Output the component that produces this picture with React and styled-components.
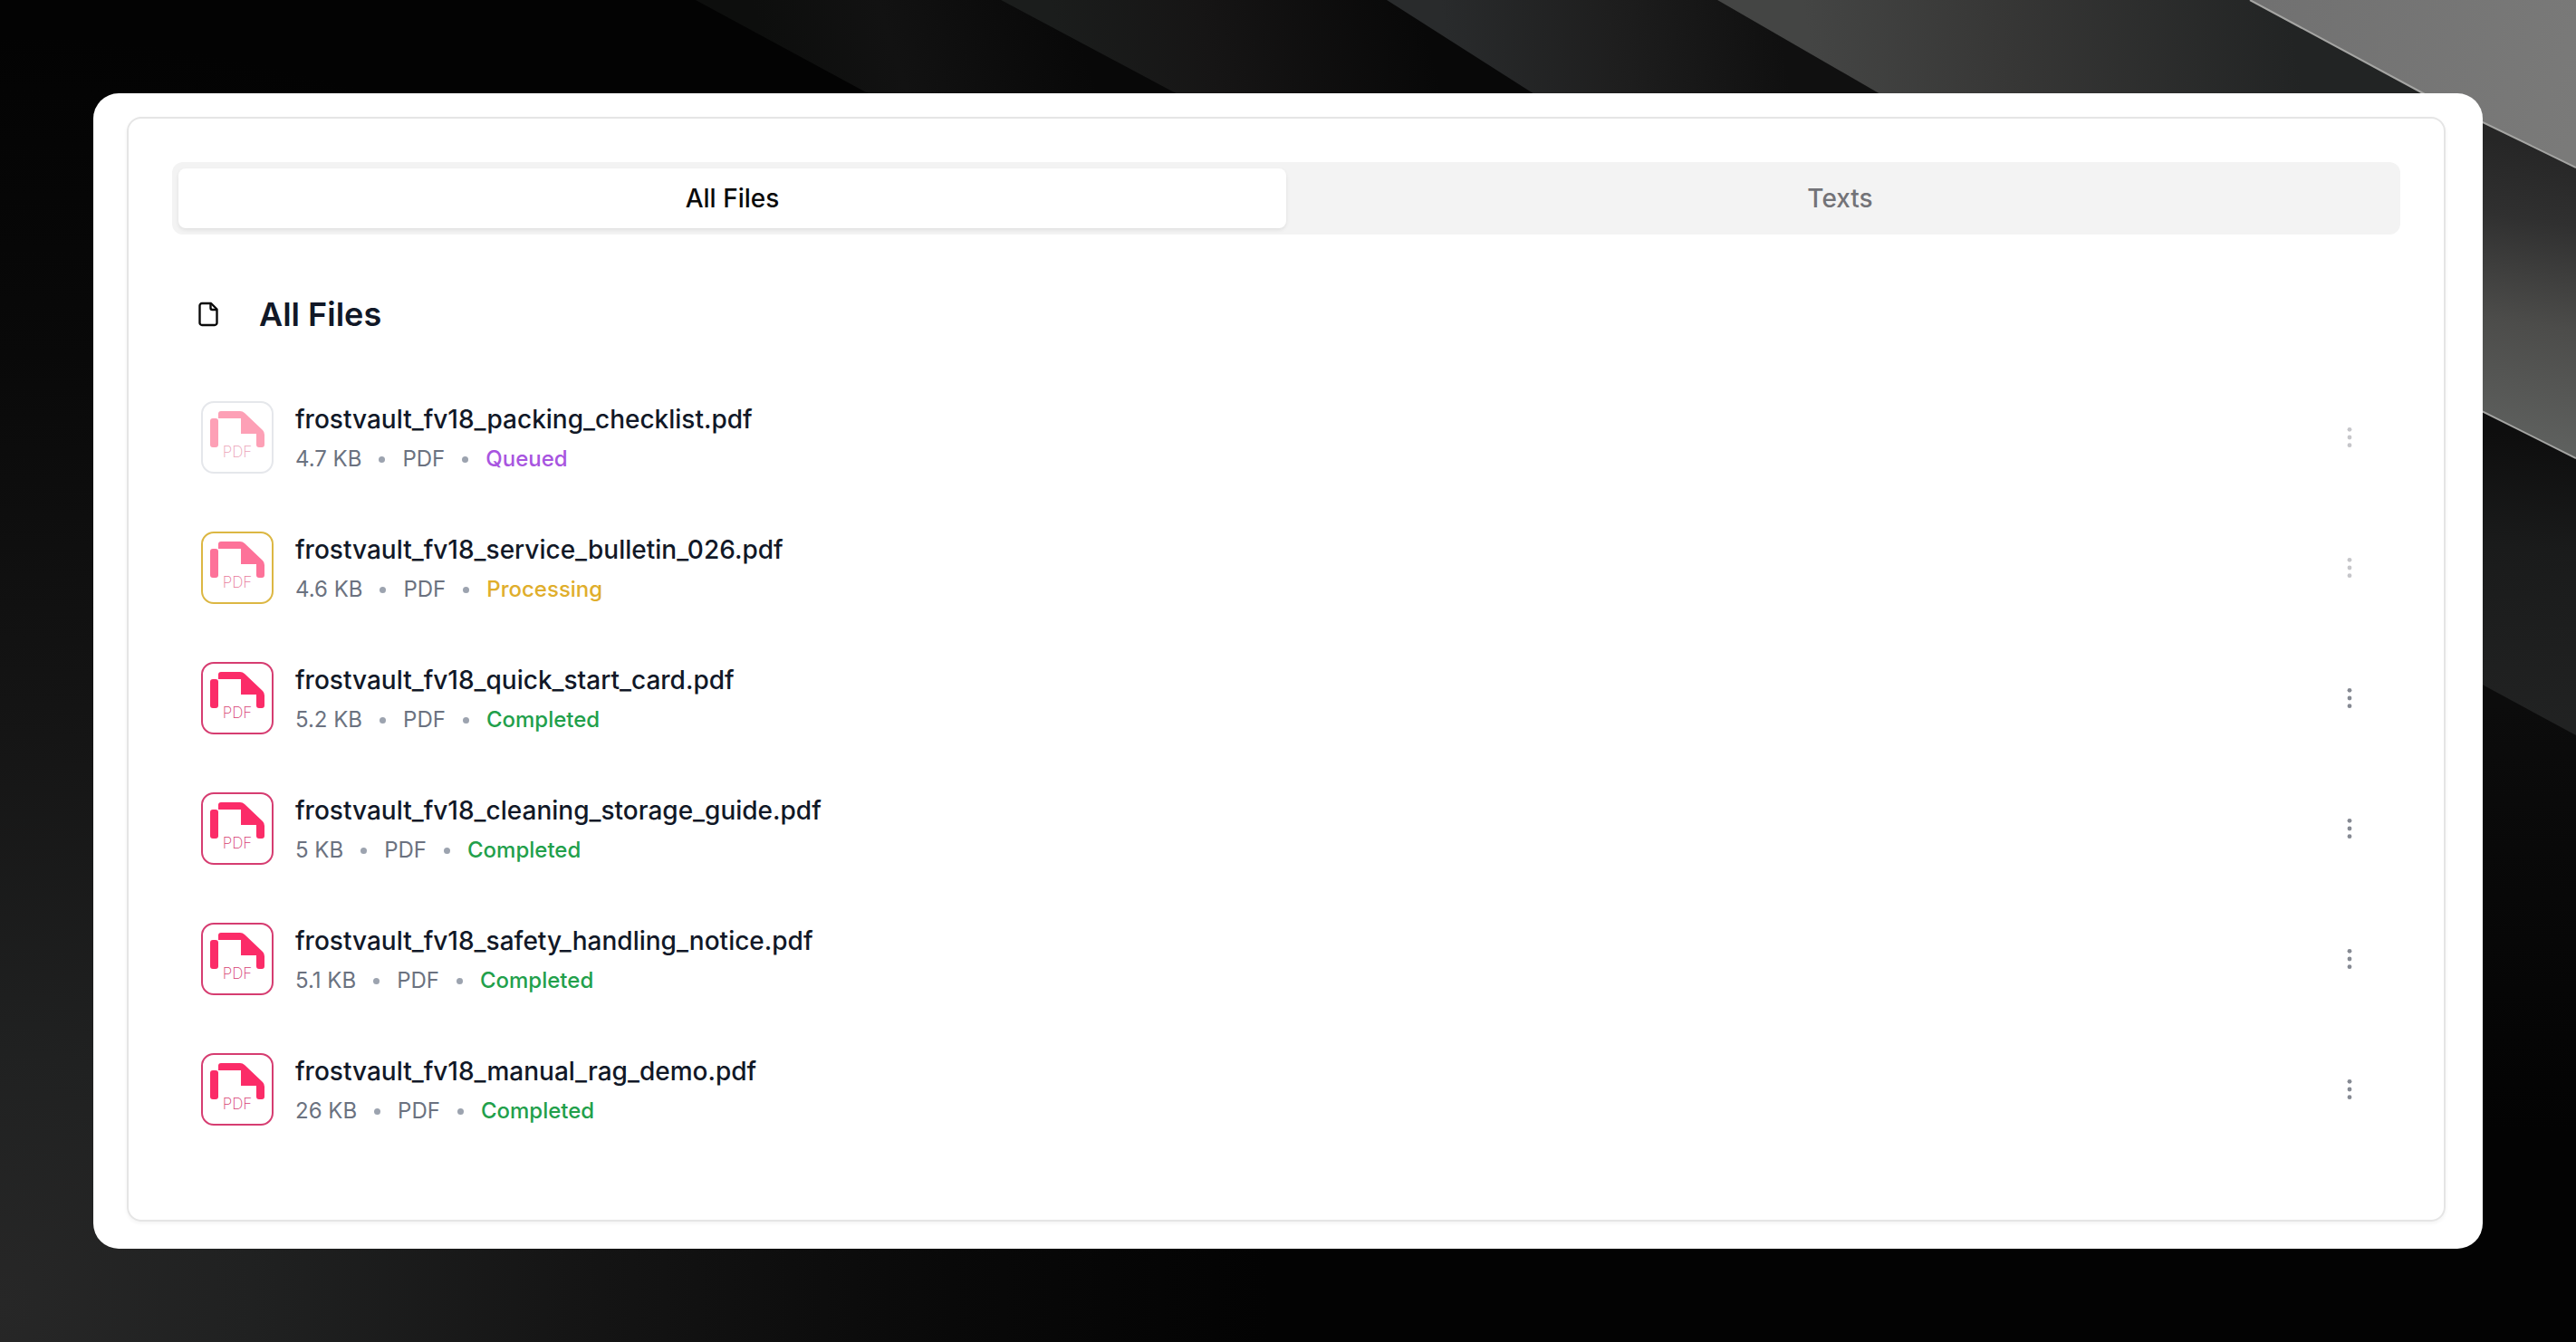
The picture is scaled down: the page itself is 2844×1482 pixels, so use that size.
import React, { useState } from "react";
import styled, { createGlobalStyle } from "styled-components";

const GlobalStyle = createGlobalStyle`
  * {
    box-sizing: border-box;
  }

  body {
    margin: 0;
    background: #000;
    font-family: Inter, "Liberation Sans", sans-serif;
    -webkit-font-smoothing: antialiased;
  }
`;

const Page = styled.main`
  position: relative;
  min-height: 100vh;
  padding: 103px;
  display: flex;
`;

const Backdrop = styled.svg`
  position: absolute;
  inset: 0;
  width: 100%;
  height: 100%;
`;

const Window = styled.div`
  position: relative;
  flex: 1;
  display: flex;
  padding: 26px 41px 30px 37px;
  background: #fff;
  border-radius: 28px;
`;

const Card = styled.section`
  flex: 1;
  padding: 48px;
  border: 2px solid #e5e5e5;
  border-radius: 16px;
  box-shadow: 0 2px 4px rgba(0, 0, 0, 0.05);
`;

const TabList = styled.div`
  display: grid;
  grid-template-columns: 1fr 1fr;
  height: 80px;
  padding: 7px;
  background: #f3f3f3;
  border-radius: 12px;
`;

const Tab = styled.button`
  border: none;
  border-radius: 8px;
  font-family: inherit;
  font-size: 28px;
  font-weight: 500;
  cursor: pointer;
  color: ${({ $active }) => ($active ? "#0a0a0a" : "#737378")};
  background: ${({ $active }) => ($active ? "#fff" : "transparent")};
  box-shadow: ${({ $active }) =>
    $active ? "0 2px 4px rgba(0, 0, 0, 0.08)" : "none"};
`;

const Header = styled.header`
  display: flex;
  align-items: center;
  gap: 42px;
  height: 48px;
  margin: 64px 0 40px 26px;
`;

const Heading = styled.h2`
  margin: 0;
  font-size: 36px;
  font-weight: 600;
  line-height: 48px;
  color: #111827;
`;

const FileList = styled.ul`
  margin: 0;
  padding: 0;
  list-style: none;
`;

const FileRow = styled.li`
  display: flex;
  align-items: center;
  gap: 24px;
  height: 144px;
  padding: 0 32px;
`;

const FileTile = styled.div`
  display: grid;
  place-items: center;
  width: 80px;
  height: 80px;
  border: 2px solid ${({ $border }) => $border};
  border-radius: 14px;
`;

const FileInfo = styled.div`
  flex: 1;
  padding-top: 4px;
`;

const FileName = styled.div`
  font-size: 28px;
  font-weight: 500;
  line-height: 40px;
  color: #111827;
`;

const Meta = styled.div`
  display: flex;
  align-items: center;
  gap: 19px;
  margin-top: 4px;
  font-size: 24px;
  line-height: 40px;
  color: #6b7280;
`;

const Dot = styled.span`
  width: 7px;
  height: 7px;
  border-radius: 50%;
  background: #9ca3af;
`;

const Status = styled.span`
  font-weight: 500;
  color: ${({ $color }) => $color};
`;

const MenuButton = styled.button`
  display: grid;
  place-items: center;
  width: 48px;
  height: 48px;
  padding: 0;
  border: none;
  background: none;
  color: #868a93;
  cursor: pointer;

  &:disabled {
    color: #c6c6ca;
    cursor: default;
  }
`;

const STATUS = {
  Queued: { text: "#a855e0", border: "#e5e7eb", icon: "#fda0b6", label: "#eba3b8" },
  Processing: { text: "#e0ae2c", border: "#dcb743", icon: "#fd7299", label: "#e8799c" },
  Completed: { text: "#22a04b", border: "#d63d71", icon: "#fb2c68", label: "#d63d71" },
};

const FILES = [
  { name: "frostvault_fv18_packing_checklist.pdf", size: "4.7 KB", status: "Queued" },
  { name: "frostvault_fv18_service_bulletin_026.pdf", size: "4.6 KB", status: "Processing" },
  { name: "frostvault_fv18_quick_start_card.pdf", size: "5.2 KB", status: "Completed" },
  { name: "frostvault_fv18_cleaning_storage_guide.pdf", size: "5 KB", status: "Completed" },
  { name: "frostvault_fv18_safety_handling_notice.pdf", size: "5.1 KB", status: "Completed" },
  { name: "frostvault_fv18_manual_rag_demo.pdf", size: "26 KB", status: "Completed" },
];

const TABS = ["All Files", "Texts"];

const Wallpaper = () => (
  <Backdrop viewBox="0 0 2844 1482" preserveAspectRatio="none" aria-hidden="true">
    <defs>
      <radialGradient id="glow" gradientUnits="userSpaceOnUse" cx="0" cy="1440" r="1400">
        <stop offset="0" stopColor="#272727" />
        <stop offset="0.2" stopColor="#202121" />
        <stop offset="0.45" stopColor="#151515" />
        <stop offset="0.75" stopColor="#090909" />
        <stop offset="1" stopColor="#030303" />
      </radialGradient>
      <linearGradient id="band1" gradientUnits="userSpaceOnUse" x1="860" y1="100" x2="1180" y2="0">
        <stop offset="0" stopColor="#0d0e0d" />
        <stop offset="0.4" stopColor="#121212" />
        <stop offset="1" stopColor="#080808" />
      </linearGradient>
      <linearGradient id="band2" gradientUnits="userSpaceOnUse" x1="1180" y1="80" x2="1560" y2="-20">
        <stop offset="0" stopColor="#1b1d1c" />
        <stop offset="0.4" stopColor="#161515" />
        <stop offset="1" stopColor="#080808" />
      </linearGradient>
      <linearGradient id="band3" gradientUnits="userSpaceOnUse" x1="1600" y1="60" x2="1960" y2="0">
        <stop offset="0" stopColor="#292b2c" />
        <stop offset="0.5" stopColor="#1e1e1e" />
        <stop offset="1" stopColor="#101010" />
      </linearGradient>
      <linearGradient id="band4" gradientUnits="userSpaceOnUse" x1="2000" y1="60" x2="2520" y2="-30">
        <stop offset="0" stopColor="#444544" />
        <stop offset="0.4" stopColor="#373736" />
        <stop offset="1" stopColor="#222424" />
      </linearGradient>
      <linearGradient id="band4side" gradientUnits="userSpaceOnUse" x1="2790" y1="160" x2="2740" y2="480">
        <stop offset="0" stopColor="#262626" />
        <stop offset="0.25" stopColor="#303030" />
        <stop offset="0.6" stopColor="#4c4c4a" />
        <stop offset="1" stopColor="#5e605e" />
      </linearGradient>
      <linearGradient id="band3side" gradientUnits="userSpaceOnUse" x1="2790" y1="480" x2="2760" y2="790">
        <stop offset="0" stopColor="#0e0e0e" />
        <stop offset="0.4" stopColor="#1a1b1b" />
        <stop offset="1" stopColor="#212222" />
      </linearGradient>
      <linearGradient id="band2side" gradientUnits="userSpaceOnUse" x1="2790" y1="780" x2="2790" y2="1250">
        <stop offset="0" stopColor="#0c0c0c" />
        <stop offset="1" stopColor="#030303" />
      </linearGradient>
      <linearGradient id="band5" gradientUnits="userSpaceOnUse" x1="2500" y1="0" x2="2844" y2="140">
        <stop offset="0" stopColor="#717171" />
        <stop offset="1" stopColor="#7a7a79" />
      </linearGradient>
    </defs>
    <rect width="2844" height="1482" fill="url(#glow)" />
    <path d="M768 0H1105L1300 104H960Z" fill="url(#band1)" />
    <path d="M1105 0H1531L1694 104H1300Z" fill="url(#band2)" />
    <path d="M1531 0H1896L2076 104H1694Z" fill="url(#band3)" />
    <path d="M1896 0H2484L2677 104H2076Z" fill="url(#band4)" />
    <path d="M2700 730L2844 812V1300H2700Z" fill="url(#band2side)" />
    <path d="M2700 434L2844 506V812L2700 734Z" fill="url(#band3side)" />
    <path d="M2700 114L2844 185V506L2700 434Z" fill="url(#band4side)" />
    <path d="M2484 0H2844V185L2677 104Z" fill="url(#band5)" />
    <path d="M2484 0L2677 104L2844 185M2700 434L2844 506" fill="none" stroke="#a5a5a3" strokeWidth="2" />
  </Backdrop>
);

const FileOutline = () => (
  <svg width="28" height="28" viewBox="0 0 28 28" fill="none" stroke="#0a0a0a" strokeWidth="2.4" strokeLinejoin="round" aria-hidden="true">
    <path d="M7 2H17L23.500 8.500V23.500a2.500 2.500 0 0 1-2.500 2.500H7a2.500 2.500 0 0 1-2.500-2.500V4.500A2.500 2.500 0 0 1 7 2Z" />
    <path d="M16.500 2V7a2 2 0 0 0 2 2H23.500" />
  </svg>
);

const PdfIcon = ({ color, label }) => (
  <svg width="76" height="76" viewBox="0 0 76 76" aria-hidden="true">
    <g fill={color}>
      <path d="M17 12a3 3 0 0 1 3-3H41q3 0 5 2L66 30q2 2 2 5V46a3 3 0 0 1-3 3H62a3 3 0 0 1-3-3V34H42V17H17Z" />
      <rect x="8" y="17" width="9" height="32" rx="3" />
    </g>
    <text x="38" y="60" textAnchor="middle" fontFamily="Inter, sans-serif" fontSize="17" fontWeight="200" fill={label}>
      PDF
    </text>
  </svg>
);

const MoreIcon = () => (
  <svg width="28" height="28" viewBox="0 0 28 28" fill="currentColor" aria-hidden="true">
    <circle cx="14" cy="5.300" r="2.400" />
    <circle cx="14" cy="14" r="2.400" />
    <circle cx="14" cy="22.700" r="2.400" />
  </svg>
);

const App = () => {
  const [activeTab, setActiveTab] = useState("All Files");

  return (
    <>
      <GlobalStyle />
      <Page>
        <Wallpaper />
        <Window>
          <Card>
            <TabList role="tablist">
              {TABS.map((tab) => (
                <Tab
                  key={tab}
                  type="button"
                  role="tab"
                  aria-selected={tab === activeTab}
                  $active={tab === activeTab}
                  onClick={() => setActiveTab(tab)}
                >
                  {tab}
                </Tab>
              ))}
            </TabList>

            <Header>
              <FileOutline />
              <Heading>{activeTab}</Heading>
            </Header>

            {activeTab === "All Files" && (
              <FileList>
                {FILES.map((file) => (
                  <FileRow key={file.name}>
                    <FileTile $border={STATUS[file.status].border}>
                      <PdfIcon
                        color={STATUS[file.status].icon}
                        label={STATUS[file.status].label}
                      />
                    </FileTile>
                    <FileInfo>
                      <FileName>{file.name}</FileName>
                      <Meta>
                        <span>{file.size}</span>
                        <Dot />
                        <span>PDF</span>
                        <Dot />
                        <Status $color={STATUS[file.status].text}>{file.status}</Status>
                      </Meta>
                    </FileInfo>
                    <MenuButton type="button" aria-label="File actions" disabled={file.status !== "Completed"}>
                      <MoreIcon />
                    </MenuButton>
                  </FileRow>
                ))}
              </FileList>
            )}
          </Card>
        </Window>
      </Page>
    </>
  );
};

export default App;
